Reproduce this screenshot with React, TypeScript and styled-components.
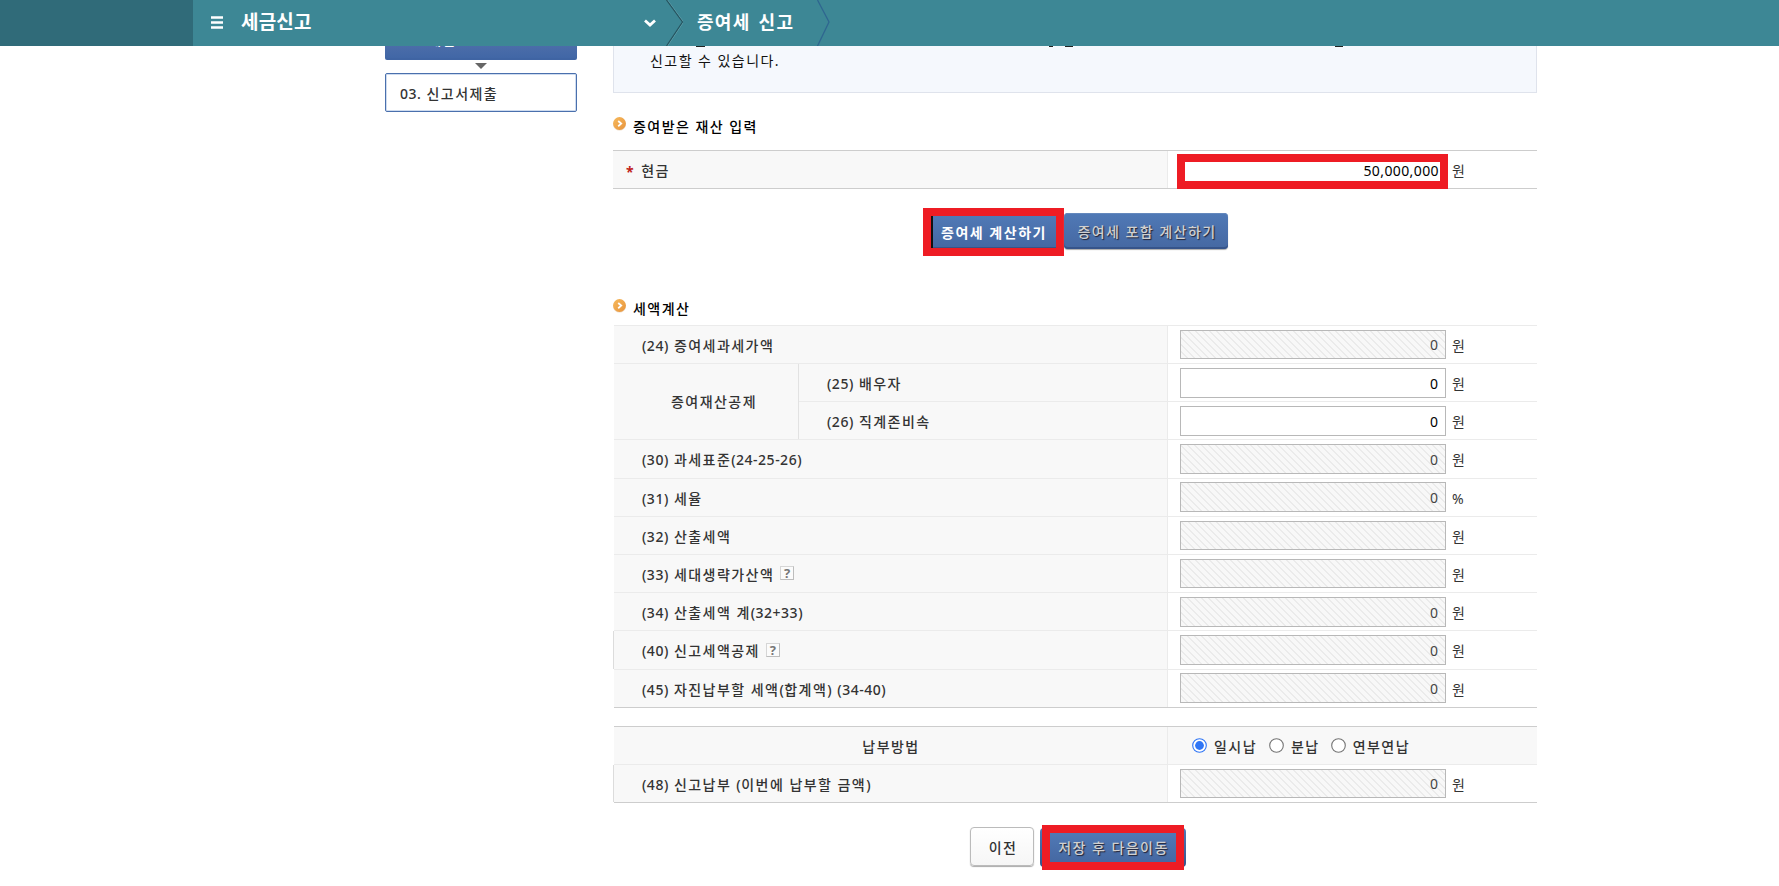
import React from "react";
import styled, { createGlobalStyle } from "styled-components";

const Global = createGlobalStyle`
  *, *::before, *::after { box-sizing: border-box; }
  html, body { margin: 0; padding: 0; background: #fff; overflow: hidden; }
  body { font-family: "Noto Sans", "Noto Sans CJK KR", sans-serif; font-size: 14px; color: #333; }
  #root { height: 886px; overflow: hidden; }
`;

type TextProps = { $ls?: number; $ws?: number; $weight?: number; $size?: number; $color?: string; $dy?: number; $shadow?: string };
const Text = styled.span<TextProps>`
  white-space: pre;
  line-height: 20px;
  font-size: ${(p) => p.$size ?? 14}px;
  font-weight: ${(p) => p.$weight ?? 500};
  letter-spacing: ${(p) => p.$ls ?? 1.45}px;
  word-spacing: ${(p) => p.$ws ?? 0}px;
  color: ${(p) => p.$color ?? "#333"};
  text-shadow: ${(p) => p.$shadow ?? "none"};
  margin-top: ${(p) => p.$dy ?? 0}px;
`;
const Latin = styled.span`
  letter-spacing: 0.5px;
`;

const Page = styled.div`
  width: 1779px;
  height: 886px;
  overflow: hidden;
  display: flex;
  flex-direction: column;
`;
const Header = styled.header`
  flex: none;
  height: 46px;
  display: flex;
  align-items: center;
  background: #3d8795;
`;
const HeaderDark = styled.div`
  width: 193px;
  height: 46px;
  background: #306b79;
`;
const MenuIcon = styled.svg`
  margin-left: 18px;
  margin-bottom: 1px;
  width: 12px;
  height: 13px;
`;
const MenuTitle = styled.div`
  width: 401px;
  margin-left: 18px;
  margin-right: 1px;
  display: flex;
  padding-bottom: 2px;
`;
const Crumb = styled.div`
  width: 119px;
  padding: 0 0 2px 14px;
  display: flex;
`;
const Body = styled.div`
  display: flex;
  padding-left: 385px;
`;
const Side = styled.nav`
  width: 192px;
  margin-right: 36px;
  display: flex;
  flex-direction: column;
  align-items: center;
`;
const StepActive = styled.div`
  width: 192px;
  height: 14px;
  overflow: hidden;
  background: linear-gradient(#4b6da9, #4167a6);
  border-bottom: 2px solid #3f64a3;
  border-radius: 0 0 2px 2px;
  padding-left: 14px;
  display: flex;
  align-items: flex-end;
`;
const StepText = styled.div`
  height: 20px;
  margin-bottom: 8px;
  display: flex;
`;
const StepArrow = styled.svg`
  width: 12px;
  height: 6px;
  margin: 3px 0 4px;
`;
const Step = styled.div`
  width: 192px;
  height: 39px;
  border: 1px solid #4a70ad;
  border-radius: 2px;
  box-shadow: inset 0 0 0 1px #cfdcef;
  padding: 3px 0 0 14px;
  display: flex;
  align-items: center;
`;
const Main = styled.main`
  width: 924px;
  display: flex;
  flex-direction: column;
`;
const Notice = styled.div`
  height: 47px;
  border: solid #dfe3ec;
  border-width: 0 1px 1px;
  background: #f5f8fd;
  padding-left: 36px;
  display: flex;
  flex-direction: column;
`;
const Tails = styled.div`
  height: 1px;
  display: flex;
`;
const Tail = styled.i<{ $gap: number; $w: number }>`
  margin-left: ${(p) => p.$gap}px;
  width: ${(p) => p.$w}px;
  height: 1px;
  background: #222;
`;
const NoticeLine = styled.div`
  margin-top: 4px;
  display: flex;
`;
const Heading = styled.h2<{ $top: number; $h: number }>`
  margin: ${(p) => p.$top}px 0 0;
  height: ${(p) => p.$h}px;
  display: flex;
  align-items: flex-start;
  gap: 7px;
`;
const Bullet = styled.svg`
  width: 13px;
  height: 14px;
`;
const Table = styled.div<{ $strong?: boolean; $gap?: number; $indent?: number }>`
  margin-left: ${(p) => p.$indent ?? 1}px;
  margin-top: ${(p) => p.$gap ?? 0}px;
  border-top: 1px solid ${(p) => (p.$strong ? "#cdcdcd" : "#ebebeb")};
  border-bottom: 1px solid #cdcdcd;
  display: flex;
  flex-direction: column;
`;
const Row = styled.div<{ $h: number; $last?: boolean; $fill?: boolean }>`
  height: ${(p) => p.$h}px;
  display: flex;
  border-bottom: ${(p) => (p.$last ? "0" : "1px solid #ebebeb")};
  background: ${(p) => (p.$fill ? "#f8f8f8" : "#fff")};
`;
const Label = styled.div<{ $pad?: number; $center?: boolean; $edge?: boolean; $wide?: boolean }>`
  flex: none;
  width: ${(p) => (p.$edge || p.$wide ? 555 : 554)}px;
  margin-left: ${(p) => (p.$edge ? -1 : 0)}px;
  border-left: ${(p) => (p.$edge ? "1px solid #dcdcdc" : "0")};
  border-right: 1px solid #ebebeb;
  background: #f8f8f8;
  display: flex;
  align-items: center;
  justify-content: ${(p) => (p.$center ? "center" : "flex-start")};
  padding-top: 2px;
  padding-left: ${(p) => p.$pad ?? 28}px;
`;
const Value = styled.div`
  flex: 1;
  display: flex;
  align-items: flex-start;
  padding-left: 12px;
`;
const Split = styled.div`
  display: flex;
  border-bottom: 1px solid #ebebeb;
`;
const SplitLabel = styled.div`
  width: 185px;
  border-right: 1px solid #e2e2e2;
  background: #f8f8f8;
  padding: 1px 0 0 16px;
  display: flex;
  align-items: center;
  justify-content: center;
`;
const SplitRows = styled.div`
  flex: 1;
`;
const SubLabel = styled.div`
  flex: none;
  width: 369px;
  padding: 2px 0 0 28px;
  border-right: 1px solid #ebebeb;
  background: #f8f8f8;
  display: flex;
  align-items: center;
`;
const Field = styled.div<{ $off?: boolean; $top?: number; $h?: number }>`
  flex: none;
  width: 266px;
  height: ${(p) => p.$h ?? 30}px;
  margin: ${(p) => p.$top ?? 4}px 6px 0 0;
  border: 1px solid #b8b8b8;
  background: ${(p) =>
    p.$off
      ? "repeating-linear-gradient(45deg, #f8f8f8 0 3.6px, #ebebeb 3.6px 4.95px)"
      : "#fff"};
  display: flex;
  align-items: center;
  justify-content: flex-end;
  padding: 1px 7px 0 0;
`;
const MarkedField = styled.div`
  flex: none;
  width: 271px;
  height: 35px;
  margin: 3px 4px -1px -3px;
  border: 8px solid #ee1c24;
  background: #fff;
  display: flex;
  align-items: center;
  justify-content: flex-end;
  padding: 0 1px 1px 0;
  z-index: 1;
`;
const Unit = styled.div`
  margin-top: 10px;
  display: flex;
`;
const Help = styled.span`
  width: 14px;
  height: 14px;
  margin: -3px 0 0 6px;
  border: 1px solid #d6d6d6;
  border-right-color: #bdbdbd;
  border-bottom-color: #bdbdbd;
  background: #fbfbfb;
  color: #777;
  font-size: 13px;
  font-weight: 700;
  line-height: 12px;
  text-align: center;
`;
const Radio = styled.svg<{ $gap: number }>`
  width: 15px;
  height: 15px;
  margin-left: ${(p) => p.$gap}px;
  margin-right: 7px;
`;
const Radios = styled.div`
  display: flex;
  align-items: center;
`;
const Buttons = styled.div<{ $top: number; $left: number }>`
  margin: ${(p) => p.$top}px 0 0 ${(p) => p.$left}px;
  display: flex;
  align-items: flex-start;
`;
const MarkedButton = styled.button<{ $w: number; $h: number; $caret?: boolean }>`
  width: ${(p) => p.$w}px;
  height: ${(p) => p.$h}px;
  padding: 1px 0 0 1px;
  border: 8px solid #ee1c24;
  background: linear-gradient(#5079b6, #4568a2) padding-box;
  box-shadow: ${(p) => (p.$caret ? "inset 2px 0 0 #111, inset 0 -1px 0 #3a5486" : "none")};
  display: flex;
  align-items: center;
  justify-content: center;
  font-family: inherit;
`;
const BlueButton = styled.button`
  width: 164px;
  height: 36px;
  margin-top: 5px;
  padding: 2px 0 0 2px;
  border: 0;
  border-radius: 4px;
  background: linear-gradient(#5079b6, #4568a2);
  box-shadow: inset 0 1px 0 #6488bd, inset 0 -2px 0 #36548a, 0 1px 1px #aaa;
  display: flex;
  align-items: center;
  justify-content: center;
  font-family: inherit;
`;
const WhiteButton = styled.button`
  width: 64px;
  height: 39px;
  margin: 2px 6px 0 0;
  padding: 2px 0 0 2px;
  border: 1px solid #bbb;
  border-radius: 4px;
  background: linear-gradient(#fff, #f6f6f6);
  box-shadow: 0 1px 1px #aaa;
  display: flex;
  align-items: center;
  justify-content: center;
  font-family: inherit;
`;
const ButtonEdge = styled.div`
  height: 39px;
  margin-top: 3px;
  padding: 0 2px;
  border-radius: 4px;
  background: linear-gradient(#5079b6, #36548a);
  display: flex;
  align-items: center;
`;

/* Digits and punctuation are tracked tighter than the Hangul around them. */
const Mixed = ({ children }: { children: string }) => (
  <Text $ws={1}>
    {children
      .split(/([\x20-\x7e]+)/)
      .filter(Boolean)
      .map((part, i) => (/^[\x20-\x7e]/.test(part) ? <Latin key={i}>{part}</Latin> : part))}
  </Text>
);

const Dot = () => (
  <Bullet viewBox="0 0 13 14">
    <defs>
      <linearGradient id="dot" x1="0" y1="0" x2="1" y2="1">
        <stop offset="0" stopColor="#f6b95c" />
        <stop offset="1" stopColor="#e8943c" />
      </linearGradient>
    </defs>
    <circle cx="6.5" cy="7.2" r="6.4" fill="#ecd9c4" />
    <circle cx="6.5" cy="6.5" r="6.4" fill="url(#dot)" />
    <path d="M5.2 4 L8.2 6.6 L5.2 9.2" fill="none" stroke="#fff" strokeWidth="1.8" />
  </Bullet>
);

const RadioDot = ({ on, gap }: { on?: boolean; gap: number }) => (
  <Radio $gap={gap} viewBox="0 0 15 15">
    <circle cx="7.5" cy="7.5" r="6.8" fill="#fff" stroke={on ? "#2f75f5" : "#757575"} strokeWidth="1.1" />
    {on && <circle cx="7.5" cy="7.5" r="4.4" fill="#2f75f5" />}
  </Radio>
);

type Item = { label: string; h: number; value?: string; unit?: string; help?: boolean; edge?: boolean; top?: number; fh?: number; last?: boolean };

const Amount = ({ value, off, unit = "원", top, fh }: { value?: string; off?: boolean; unit?: string; top?: number; fh?: number }) => (
  <Value>
    <Field $off={off} $top={top} $h={fh}>
      <Text $weight={400} $ls={0} $color={off ? "#444" : "#000"}>{value}</Text>
    </Field>
    <Unit>
      <Text $weight={400} $ls={0}>{unit}</Text>
    </Unit>
  </Value>
);

const Line = ({ label, h, value = "0", unit, help, edge, top, fh, last }: Item) => (
  <Row $h={h} $last={last}>
    <Label $edge={edge}>
      <Mixed>{label}</Mixed>
      {help && <Help>?</Help>}
    </Label>
    <Amount value={value} unit={unit} off top={top} fh={fh} />
  </Row>
);

const lines: Item[] = [
  { label: "(30) 과세표준(24-25-26)", h: 39 },
  { label: "(31) 세율", h: 38, unit: "%", top: 3 },
  { label: "(32) 산출세액", h: 38, value: "", fh: 29 },
  { label: "(33) 세대생략가산액", h: 38, value: "", help: true, fh: 29 },
  { label: "(34) 산출세액 계(32+33)", h: 38 },
  { label: "(40) 신고세액공제", h: 39, help: true, edge: true },
  { label: "(45) 자진납부할 세액(합계액) (34-40)", h: 37, top: 3, last: true },
];

export default function App() {
  return (
    <Page>
      <Global />
      <Header>
        <HeaderDark />
        <MenuIcon viewBox="0 0 12 13">
          <path d="M0 1.5H12M0 6.5H12M0 11.5H12" stroke="#fff" strokeWidth="2.4" />
        </MenuIcon>
        <MenuTitle>
          <Text $size={19} $weight={700} $ls={0.2} $color="#fff">세금신고</Text>
        </MenuTitle>
        <svg width="14" height="10" viewBox="0 0 14 10">
          <path d="M2 2.5 L7 7 L12 2.5" fill="none" stroke="#fff" strokeWidth="2.8" />
        </svg>
        <svg width="26" height="46" viewBox="0 0 26 46">
          <path d="M10.5 0 L26.5 22 L10.5 46" fill="none" stroke="#5f9fab" />
          <path d="M9.5 0 L25.5 22 L9.5 46" fill="none" stroke="#26535e" strokeWidth="1.2" />
        </svg>
        <Crumb>
          <Text $size={18} $weight={700} $ls={1.3} $ws={2} $color="#fff">증여세 신고</Text>
        </Crumb>
        <svg width="30" height="46" viewBox="0 0 30 46">
          <path d="M15.5 0 L27 22 L15.5 46" fill="none" stroke="#2f6690" strokeWidth="1.3" />
        </svg>
      </Header>
      <Body>
        <Side>
          <StepActive>
            <StepText><Text $color="#fff">02. 계산</Text></StepText>
          </StepActive>
          <StepArrow viewBox="0 0 12 6"><path d="M0 0H12L6 6Z" fill="#666" /></StepArrow>
          <Step><Mixed>03. 신고서제출</Mixed></Step>
        </Side>
        <Main>
          <Notice>
            <Tails>
              <Tail $gap={46} $w={9} />
              <Tail $gap={344} $w={4} />
              <Tail $gap={12} $w={8} />
              <Tail $gap={262} $w={8} />
            </Tails>
            <NoticeLine><Text $weight={400} $color="#111">신고할 수 있습니다.</Text></NoticeLine>
          </Notice>
          <Heading $top={24} $h={33}>
            <Dot />
            <Text $color="#000">증여받은 재산 입력</Text>
          </Heading>
          <Table $strong $indent={0}>
            <Row $h={37} $last>
              <Label $pad={13} $wide>
                <Text $color="#c0221c" $weight={700} $ls={2.5} $dy={3}>*</Text>
                <Text> 현금</Text>
              </Label>
              <Value>
                <MarkedField><Text $weight={400} $ls={0.4} $color="#000">50,000,000</Text></MarkedField>
                <Unit><Text $weight={400} $ls={0}>원</Text></Unit>
              </Value>
            </Row>
          </Table>
          <Buttons $top={19} $left={310}>
            <MarkedButton $w={141} $h={48} $caret>
              <Text $weight={700} $color="#fff" $ls={1.5}>증여세 계산하기</Text>
            </MarkedButton>
            <BlueButton>
              <Text $color="#d0d0d0" $shadow="1px 1px 1px #223">증여세 포함 계산하기</Text>
            </BlueButton>
          </Buttons>
          <Heading $top={43} $h={26}>
            <Dot />
            <Text $color="#000">세액계산</Text>
          </Heading>
          <Table>
            <Line label="(24) 증여세과세가액" h={38} fh={29} />
            <Split>
              <SplitLabel><Text>증여재산공제</Text></SplitLabel>
              <SplitRows>
                <Row $h={38}>
                  <SubLabel><Mixed>(25) 배우자</Mixed></SubLabel>
                  <Amount value="0" />
                </Row>
                <Row $h={37} $last>
                  <SubLabel><Mixed>(26) 직계존비속</Mixed></SubLabel>
                  <Amount value="0" />
                </Row>
              </SplitRows>
            </Split>
            {lines.map((l) => <Line key={l.label} {...l} />)}
          </Table>
          <Table $strong $gap={18}>
            <Row $h={38} $fill>
              <Label $center $pad={1}><Text>납부방법</Text></Label>
              <Radios>
                <RadioDot on gap={24} /><Text $dy={2}>일시납</Text>
                <RadioDot gap={12} /><Text $dy={2}>분납</Text>
                <RadioDot gap={11} /><Text $dy={2}>연부연납</Text>
              </Radios>
            </Row>
            <Line label="(48) 신고납부 (이번에 납부할 금액)" h={37} edge fh={29} last />
          </Table>
          <Buttons $top={22} $left={357}>
            <WhiteButton><Text>이전</Text></WhiteButton>
            <ButtonEdge>
              <MarkedButton $w={142} $h={45}>
                <Text $color="#d0d0d0" $shadow="1px 1px 1px #223">저장 후 다음이동</Text>
              </MarkedButton>
            </ButtonEdge>
          </Buttons>
        </Main>
      </Body>
    </Page>
  );
}
